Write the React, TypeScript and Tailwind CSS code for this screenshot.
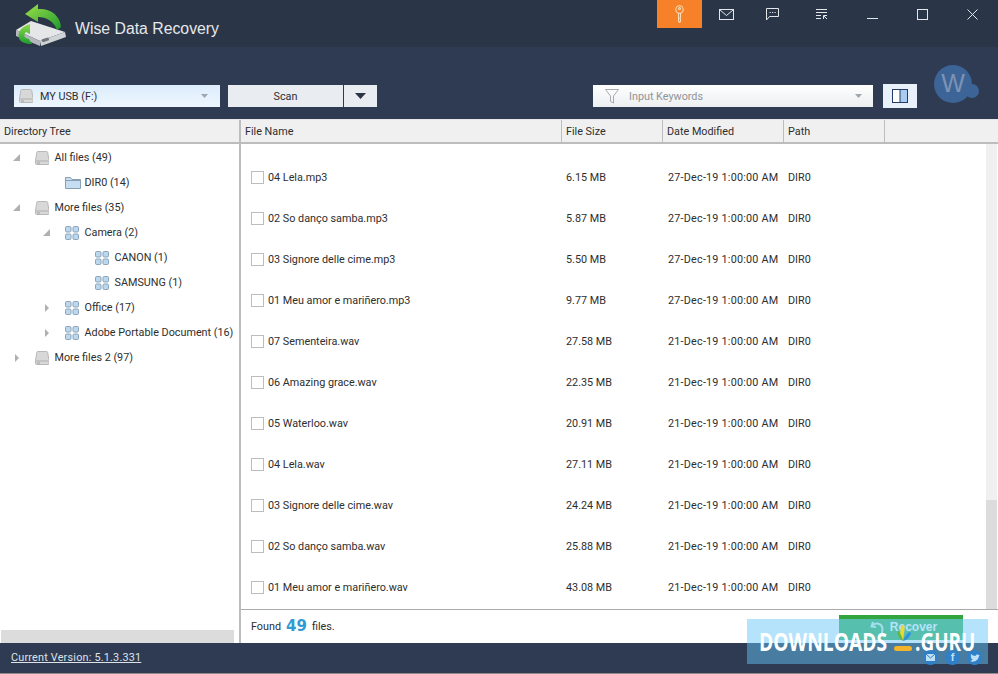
const F = "font-['Roboto','Noto_Sans',sans-serif] text-[10.800px] text-[#2e2e2e]";

type Tree = { label: string; icon: 'drive' | 'folder' | 'grid'; depth: number; arrow?: 'open' | 'closed' };
const tree: Tree[] = [
  { label: 'All files (49)', icon: 'drive', depth: 0, arrow: 'open' },
  { label: 'DIR0 (14)', icon: 'folder', depth: 1 },
  { label: 'More files (35)', icon: 'drive', depth: 0, arrow: 'open' },
  { label: 'Camera (2)', icon: 'grid', depth: 1, arrow: 'open' },
  { label: 'CANON (1)', icon: 'grid', depth: 2 },
  { label: 'SAMSUNG (1)', icon: 'grid', depth: 2 },
  { label: 'Office (17)', icon: 'grid', depth: 1, arrow: 'closed' },
  { label: 'Adobe Portable Document (16)', icon: 'grid', depth: 1, arrow: 'closed' },
  { label: 'More files 2 (97)', icon: 'drive', depth: 0, arrow: 'closed' },
];

const files = [
  ['04 Lela.mp3', '6.15 MB', '27-Dec-19 1:00:00 AM'],
  ['02 So dan\u00e7o samba.mp3', '5.87 MB', '27-Dec-19 1:00:00 AM'],
  ['03 Signore delle cime.mp3', '5.50 MB', '27-Dec-19 1:00:00 AM'],
  ['01 Meu amor e mari\u00f1ero.mp3', '9.77 MB', '27-Dec-19 1:00:00 AM'],
  ['07 Sementeira.wav', '27.58 MB', '21-Dec-19 1:00:00 AM'],
  ['06 Amazing grace.wav', '22.35 MB', '21-Dec-19 1:00:00 AM'],
  ['05 Waterloo.wav', '20.91 MB', '21-Dec-19 1:00:00 AM'],
  ['04 Lela.wav', '27.11 MB', '21-Dec-19 1:00:00 AM'],
  ['03 Signore delle cime.wav', '24.24 MB', '21-Dec-19 1:00:00 AM'],
  ['02 So dan\u00e7o samba.wav', '25.88 MB', '21-Dec-19 1:00:00 AM'],
  ['01 Meu amor e mari\u00f1ero.wav', '43.08 MB', '21-Dec-19 1:00:00 AM'],
];

function Drive() {
  return (
    <svg width="14" height="14" viewBox="0 0 14 14" className="shrink-0">
      <path d="M2.500 .5h9q1 0 1.200 1l1.300 8v3q0 1-1 1H1.500q-1 0-1-1v-3l1.300-8q.2-1 .7-1z" fill="#d8d8d8" stroke="#b8b8b8" />
      <path d="M.8 10h12.400" stroke="#b0b0b0" />
      <rect x="2" y="11.500" width="3" height="1" fill="#a0a0a0" />
    </svg>
  );
}
function Folder() {
  return (
    <svg width="16" height="12" viewBox="0 0 16 12" className="shrink-0">
      <path d="M.5 11.500V.5h5l1.500 2h8.500v9z" fill="#c5def2" stroke="#8a9fb2" />
      <path d="M.5 3.500h15" stroke="#8a9fb2" />
    </svg>
  );
}
function GridIcon() {
  return (
    <svg width="14" height="14" viewBox="0 0 14 14" className="shrink-0">
      {[0, 7.5].map((x) =>
        [0, 7.5].map((y) => (
          <rect key={`${x}-${y}`} x={x + 0.5} y={y + 0.5} width="5.500" height="5.500" rx="1.200" fill="#bcd8ee" stroke="#8aa3b8" />
        )),
      )}
    </svg>
  );
}
function Arrow({ kind }: { kind?: 'open' | 'closed' }) {
  if (!kind) return <span className="w-[7px]" />;
  return kind === 'open' ? (
    <svg width="7" height="7" viewBox="0 0 7 7"><path d="M7 0v7H0z" fill="#b0b0b0" /></svg>
  ) : (
    <svg width="7" height="8" viewBox="0 0 7 8"><path d="M2 0l4 4-4 4z" fill="#b0b0b0" /></svg>
  );
}

function Logo() {
  return (
    <svg width="54" height="46" viewBox="0 0 54 46" className="shrink-0">
      <defs>
        <linearGradient id="gr" x1="0" y1="0" x2="1" y2="1">
          <stop offset="0" stopColor="#9fe04a" />
          <stop offset="1" stopColor="#1c9a2e" />
        </linearGradient>
        <linearGradient id="gr2" x1="0" y1="0" x2="0" y2="1">
          <stop offset="0" stopColor="#8fdc4a" />
          <stop offset="1" stopColor="#1e9b30" />
        </linearGradient>
      </defs>
      <path d="M2 27L17 18L51 29L26 38z" fill="#e4e6e8" />
      <path d="M2 27L26 38L26 43L2 33z" fill="#b4b8bc" />
      <path d="M26 38L51 29L52 34L27 43z" fill="#d0d3d6" />
      <rect x="28" y="35.500" width="7" height="3" rx=".5" transform="rotate(-18 31 37)" fill="#6e747a" />
      <path d="M11 11L24 1L24 6C36 5 46 12 47 24L43 27C40 18 32 14 24 14L24 19z" fill="url(#gr)" />
      <path d="M16 21C8 23 3 29 5 35C6 39 12 41 18 41L15 36C10 35 9 32 12 29L16 31z" fill="url(#gr2)" />
    </svg>
  );
}

function Caret() {
  return (
    <svg width="7" height="4" viewBox="0 0 7 4"><path d="M0 0h7L3.500 4z" fill="#a0a6ad" /></svg>
  );
}

export default function App() {
  return (
    <div className={`relative w-[998px] h-[674px] overflow-hidden bg-white flex flex-col ${F}`}>
      {/* Title bar */}
      <div className="h-[47px] bg-[#2b3548] flex items-start shrink-0">
        <div className="ml-[14px] mt-[3px]"><Logo /></div>
        <div className="ml-[7px] mt-[19px] font-['Liberation_Sans',sans-serif] text-[15.800px] leading-[20px] text-[#e6e8ea]">Wise Data Recovery</div>
        <div className="ml-auto mr-[4px] flex items-start">
          <div className="w-[45px] h-[28px] bg-[#f78128] flex items-center justify-center">
            <svg width="9" height="18" viewBox="0 0 9 18" fill="none" stroke="#f7dcb4" strokeWidth="1.100">
              <circle cx="4.500" cy="4.500" r="3.700" /><circle cx="4.500" cy="3.500" r="1" />
              <path d="M3.500 8v8l1 1.500 1-1V14l-.7-.7.7-.7V8" />
            </svg>
          </div>
          <div className="w-[48px] h-[28px] flex items-center justify-center">
            <svg width="15" height="11" viewBox="0 0 15 11" fill="none" stroke="#e3e6ea"><rect x=".5" y=".5" width="14" height="10" /><path d="M1 1l6.500 5.500L14 1" /></svg>
          </div>
          <div className="w-[44px] h-[28px] flex items-center justify-center">
            <svg width="13" height="13" viewBox="0 0 13 13" fill="none" stroke="#e3e6ea"><path d="M.5 .5h12v8H3.500l-3 3.500z" /><path d="M3.500 4.500h1.200M6 4.500h1.200M8.500 4.500h1.200" /></svg>
          </div>
          <div className="w-[56px] h-[28px] flex items-center justify-center">
            <svg width="12" height="12" viewBox="0 0 12 12" fill="none" stroke="#e3e6ea"><path d="M0 1.500h11M0 4.500h11M0 7.500h5M0 10.500h5" /><path d="M7.500 11V7.500H11M8 8l3 3" /></svg>
          </div>
          <div className="w-[44px] h-[28px] flex items-center justify-center">
            <svg width="11" height="10" viewBox="0 0 11 10" fill="none" stroke="#e3e6ea"><path d="M0 9.500h11" /></svg>
          </div>
          <div className="w-[56px] h-[28px] flex items-center justify-center">
            <svg width="11" height="11" viewBox="0 0 11 11" fill="none" stroke="#e3e6ea"><rect x=".5" y=".5" width="10" height="10" /></svg>
          </div>
          <div className="w-[44px] h-[28px] flex items-center justify-center">
            <svg width="11" height="11" viewBox="0 0 11 11" fill="none" stroke="#e3e6ea"><path d="M.5 .5l10 10M10.500 .5l-10 10" /></svg>
          </div>
        </div>
      </div>

      {/* Toolbar */}
      <div className="h-[72px] bg-[#2f3b53] flex items-start shrink-0 pt-[38px] pl-[14px] relative">
        <div className="w-[206px] h-[22px] bg-gradient-to-b from-[#dcecfc] to-[#eef6fe] flex items-center pl-[5px] pr-[12px]">
          <Drive />
          <span className="ml-[7px] pt-[2px]">MY USB (F:)</span>
          <span className="ml-auto flex"><Caret /></span>
        </div>
        <div className="ml-[8px] w-[115px] h-[22px] bg-[#e9edf2] flex items-center justify-center pt-[2px]">Scan</div>
        <div className="ml-[1px] w-[33px] h-[22px] bg-[#e9edf2] flex items-center justify-center">
          <svg width="11" height="6" viewBox="0 0 11 6"><path d="M0 0h11L5.500 6z" fill="#2b3548" /></svg>
        </div>
        <div className="ml-[216px] w-[280px] h-[22px] bg-gradient-to-b from-white to-[#eceef0] flex items-center pl-[12px] pr-[11px]">
          <svg width="14" height="15" viewBox="0 0 14 15" fill="none" stroke="#a8acb0"><path d="M.5 .5h13L8.500 7v7l-3-1.500V7z" /></svg>
          <span className="ml-[10px] pt-[2px] text-[#8f9499]">Input Keywords</span>
          <span className="ml-auto flex"><Caret /></span>
        </div>
        <div className="ml-[10px] -mt-[1px] w-[34px] h-[24px] bg-[#e8f0fa] flex items-center justify-center">
          <svg width="16" height="14" viewBox="0 0 16 14"><rect x=".5" y=".5" width="15" height="13" fill="#fff" stroke="#1f3d66" /><rect x="8" y="1" width="7" height="12" fill="#a9cbf0" /><path d="M8 0v14" stroke="#1f3d66" /></svg>
        </div>
        <div className="absolute left-[934px] top-[18px] w-[45px] h-[38px]">
          <div className="absolute left-0 top-0 w-[38px] h-[38px] rounded-full bg-[#3c6496] flex items-center justify-center font-['Liberation_Sans',sans-serif] text-[25px] text-[#7e93b4]">W</div>
          <div className="absolute left-[31px] top-[19px] w-[14px] h-[14px] rounded-full bg-[#3c6496]" />
        </div>
      </div>

      {/* Body */}
      <div className="flex-1 flex min-h-0 border-t border-[#e6e6e6]">
        {/* Left */}
        <div className="w-[239px] shrink-0 flex flex-col">
          <div className="h-[24px] bg-[#f0f0f0] border-b-2 border-[#bdbdbd] flex items-center pl-[4px] pt-[2px] shrink-0">Directory Tree</div>
          <div className="flex-1 pt-px">
            {tree.map((t) => (
              <div key={t.label} className="h-[25px] flex items-center" style={{ paddingLeft: 13 + t.depth * 30 }}>
                <span className="w-[22px] flex"><Arrow kind={t.arrow} /></span>
                <span className="w-[19.500px] flex items-center"><Ic k={t.icon} /></span>
                <span className="whitespace-nowrap pt-[2px]">{t.label}</span>
              </div>
            ))}
          </div>
          <div className="h-[13px] ml-[1px] mr-[5px] bg-[#dcdcdc] shrink-0" />
        </div>
        <div className="w-[2px] bg-[#bdbdbd] shrink-0" />
        {/* Right */}
        <div className="flex-1 flex flex-col min-w-0">
          <div className="h-[24px] bg-[#f0f0f0] border-b-2 border-[#bdbdbd] flex shrink-0">
            <div className="w-[321px] border-r border-[#bdbdbd] pl-[4px] pt-[2px] flex items-center">File Name</div>
            <div className="w-[101px] border-r border-[#bdbdbd] pl-[4px] pt-[2px] flex items-center">File Size</div>
            <div className="w-[121px] border-r border-[#bdbdbd] pl-[4px] pt-[2px] flex items-center">Date Modified</div>
            <div className="w-[101px] border-r border-[#bdbdbd] pl-[4px] pt-[2px] flex items-center">Path</div>
          </div>
          <div className="flex-1 flex min-h-0">
            <div className="flex-1 pt-[13px]">
              {files.map((f) => (
                <div key={f[0]} className="h-[41px] flex items-center whitespace-nowrap">
                  <div className="w-[321px] flex items-center pl-[10px]">
                    <span className="w-[13px] h-[13px] border border-[#bdbdbd] bg-white mr-[4px]" />
                    <span className="pt-[2px]">{f[0]}</span>
                  </div>
                  <div className="w-[101px] pl-[4px] pt-[2px]">{f[1]}</div>
                  <div className="w-[121px] pl-[5px] pt-[2px] tracking-[0.02em]">{f[2]}</div>
                  <div className="w-[101px] pl-[4px] pt-[2px]">DIR0</div>
                </div>
              ))}
            </div>
            <div className="w-[11px] mr-px flex flex-col shrink-0">
              <div className="flex-1 bg-[#f0f0f0]" />
              <div className="h-[109px] bg-[#dcdcdc]" />
            </div>
          </div>
          <div className="h-[34px] border-t border-[#ababab] flex items-center pl-[10px] shrink-0">
            <span className="pt-[2px]">Found</span>
            <span className="mx-[5px] font-['DejaVu_Sans',sans-serif] font-bold text-[15px] text-[#2f9bd3]">49</span>
            <span className="pt-[2px]">files.</span>
            <div className="ml-auto mr-[35px] mt-[5px] self-start w-[124px] h-[25px] bg-[#49bb6c] border-t-[4px] border-[#33a53e] flex items-center justify-center pl-[5px] pb-[5px] gap-[6px] font-['Liberation_Sans',sans-serif] font-bold text-[12px] text-white">
              <svg width="14" height="14" viewBox="0 0 14 14" fill="none" stroke="#dff3e6" strokeWidth="2">
                <path d="M3 2L1.500 6.500 6 7" /><path d="M2 6C5 2 12 3 12.500 9L12 13" />
              </svg>
              Recover
            </div>
          </div>
        </div>
      </div>

      {/* Status bar */}
      <div className="h-[30px] bg-[#2f3b53] flex items-center pl-[11px] shrink-0">
        <span className="underline text-[#dfe3e8] tracking-[0.02em]">Current Version: 5.1.3.331</span>
      </div>
      <div className="h-px bg-[#8c8c8c] shrink-0" />

      {/* Watermark */}
      <div className="absolute left-[747px] top-[619px] w-[241px] h-[45px] bg-[rgba(100,196,246,0.48)] font-['Open_Sans','Noto_Sans',sans-serif]">
        <span className="absolute left-[12px] top-[5px] text-[25px] leading-[34px] font-bold text-white whitespace-nowrap origin-left scale-x-[0.77]">DOWNLOADS</span>
        <svg width="20" height="28" viewBox="0 0 20 28" className="absolute left-[147px] top-[6px]">
          <path d="M7 0c3 0 4 3 3 8l-1 8-3-6z" fill="#f3d62b" />
          <path d="M3 6c3 1 5 5 6 10-3-2-5-4-6-10z" fill="#5db84a" />
          <path d="M16 7c-2 0-6 5-7 9 4-1 7-4 8-8z" fill="#2f8fe0" />
          <rect x="0" y="21" width="18" height="5" rx="2.500" fill="#f3b32b" />
        </svg>
        <span className="absolute left-[168px] top-[5px] text-[25px] leading-[34px] font-bold text-white whitespace-nowrap origin-left scale-x-[0.76]">.GURU</span>
        {[176, 198, 220].map((x, i) => (
          <div key={x} className="absolute top-[31px] w-[15px] h-[15px] rounded-full bg-[#2f80c8] flex items-center justify-center" style={{ left: x }}>
            {i === 0 && <svg width="9" height="7" viewBox="0 0 9 7"><rect width="9" height="7" fill="#bfe0f5" /><path d="M0 0l4.500 4L9 0" fill="none" stroke="#2f80c8" /></svg>}
            {i === 1 && <span className="font-['Liberation_Sans',sans-serif] font-bold text-[11px] leading-none text-[#bfe0f5]">f</span>}
            {i === 2 && <svg width="10" height="8" viewBox="0 0 10 8"><path d="M0 7c3 1.500 8 .5 9-5l1-1-1 .2C8 0 6 0 5.500 2 4 2 2 1 1 0c-.5 1 0 2 .5 2.500L.7 2.300C.7 3.300 1.300 4 2 4.300H1.200C1.500 5 2 5.500 3 5.600 2.200 6.300 1 6.800 0 7z" fill="#bfe0f5" /></svg>}
          </div>
        ))}
      </div>
    </div>
  );
}

function Ic({ k }: { k: 'drive' | 'folder' | 'grid' }) {
  if (k === 'drive') return <Drive />;
  if (k === 'folder') return <Folder />;
  return <GridIcon />;
}
